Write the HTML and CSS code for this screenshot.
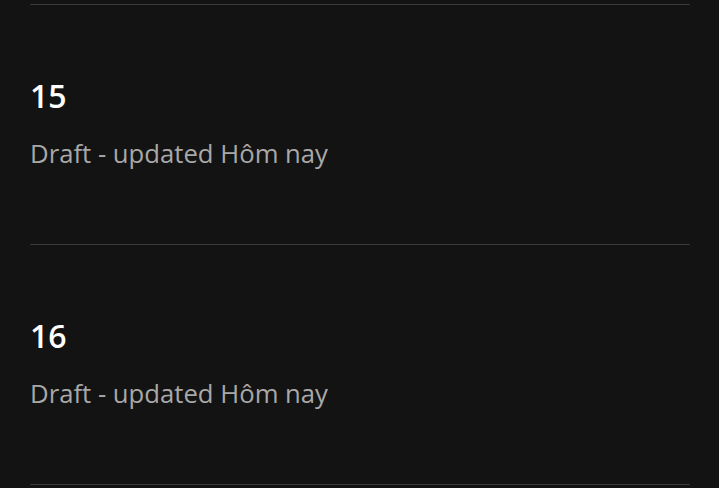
FILE: index.html
```html
<!DOCTYPE html>
<html lang="vi">
<head>
    <meta charset="UTF-8">
    <meta name="viewport" content="width=device-width, initial-scale=1.0">
    <title>Drafts</title>
    <link rel="stylesheet" href="styles.css">
</head>
<body>
    <div class="draft-list">
        <div class="draft-item">
            <div class="draft-title">15</div>
            <div class="draft-meta">Draft - updated Hôm nay</div>
        </div>
        <div class="draft-item">
            <div class="draft-title">16</div>
            <div class="draft-meta">Draft - updated Hôm nay</div>
        </div>
    </div>
</body>
</html>
```

FILE: styles.css
```css
body {
    margin: 0;
    background: #131313;
    font-family: "Open Sans", "Noto Sans", sans-serif;
    overflow: hidden;
}
.draft-list {
    margin: 4px 29px 0 30px;
    border-top: 1px solid #3c3c3c;
}
.draft-item {
    border-bottom: 1px solid #3c3c3c;
    padding: 71px 0 72px;
}
.draft-title {
    font-size: 32px;
    line-height: 40px;
    font-weight: 600;
    color: #ffffff;
}
.draft-meta {
    margin-top: 20px;
    font-size: 25.7px;
    line-height: 36px;
    color: #a8a8a8;
}
```
